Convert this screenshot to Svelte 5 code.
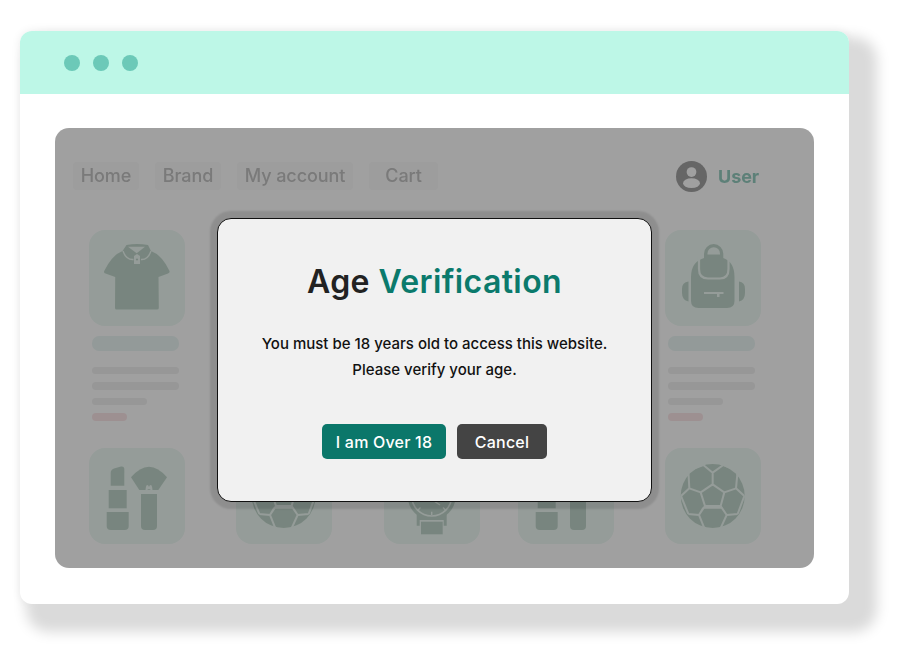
<script>
  const navItems = [
    { label: 'Home', width: 66 },
    { label: 'Brand', width: 66 },
    { label: 'My account', width: 116 },
    { label: 'Cart', width: 69 }
  ];
  const topRow = ['shirt', 'watch', 'ball', 'makeup', 'bag'];
  const bottomRow = ['makeup', 'ball', 'watch', 'makeup', 'ball'];
  const ballLines = 'M173 133 208 157 197 198 150 198 137 157Z M173 133 173 98 M208 157 243 145 M197 198 215 225 M150 198 132 225 M137 157 103 145 M173 98 145 75 M173 98 205 75 M145 75 100 92 M205 75 248 92 M100 92 103 145 M248 92 243 145 M103 145 78 168 M243 145 268 168 M78 168 100 222 M268 168 248 222 M100 222 132 225 M248 222 215 225 M145 203 200 203 M132 225 147 262 M215 225 198 262 M145 203 132 225 M200 203 215 225';
</script>

{#snippet icon(name)}
  <svg class="icon" viewBox="0 0 95 95" aria-hidden="true">
    {#if name === 'shirt'}
      <path class="fill" d="M37.5 15 Q48 13 59 15 L62 21 Q73 25 80.5 41 Q81 43 79 43.5 L69.5 47 L69.8 78 Q69.8 79.5 68 79.5 L27.5 79.5 Q26 79.5 26 78 L26.2 47 L16.5 43.5 Q14.5 43 15.2 41 Q23 25 33.5 21Z" />
      <path class="tint" d="M39 16.7 H56 L47.7 23.3Z" />
      <path class="stroke thin" d="M34 21 Q37 30 44.5 29.5 M62 21 Q59 30 52 29.5" />
      <path class="tint" d="M45 26 L48 24 L51 26 V34 H45Z" />
      <circle class="fill" cx="48" cy="29.5" r="1.1" />
    {:else if name === 'bag'}
      <path class="fill" d="M17 59 Q17 52 23.5 51.5 V71.5 Q17 70 17 63Z M80 59 Q80 52 74 51.5 V71.5 Q80 70 80 63Z" />
      <path class="fill" d="M39 28 V23.7 A9.65 9.65 0 0 1 58.3 23.7 V28 Q69.5 32 69.5 47 V71 Q69.5 78 62 78 H33.5 Q26 78 26 71 V47 Q26 32 39 28Z" />
      <path class="tint" d="M42.5 24.5 V23.5 A6.25 6.25 0 0 1 55 23.5 V24.5Z" />
      <path class="stroke" d="M34 27 V39 Q34 48.5 43 48.5 H55 Q63.5 48.5 63.5 39 V27" />
      <path class="tint" d="M39 62 H58.5 V64 H54.5 V67 H52 V64 H39Z" />
    {:else if name === 'makeup'}
      <path class="fill" d="M21.7 37.7 V25 Q21.7 21.5 25 20.5 L32 18.5 Q35.3 18 35.3 21 V37.7Z" />
      <rect class="fill" x="19.7" y="42" width="18" height="18.3" />
      <path class="fill" d="M17.7 64 H39.7 V78 Q39.7 82 35.7 82 H21.7 Q17.7 82 17.7 78Z" />
      <path class="fill" d="M52 46 H68 V78 Q68 82 64 82 H56 Q52 82 52 78Z" />
      <path class="fill" d="M42 29.3 Q60 8 78 29.3 L69.3 42 H50.3Z" />
      <path class="tint" d="M56.5 42 Q57 37 58.2 37 Q59.5 37 60 39 Q60.5 37 61.8 37 Q63 37 63.5 42 L62 42 L60 41 L58 42Z" />
    {:else if name === 'ball'}
      <circle class="fill" cx="47.7" cy="48" r="32" />
      <path class="ball-lines" transform="translate(-10 -8) scale(.3333)" d={ballLines} />
    {:else if name === 'watch'}
      <rect class="fill" x="37" y="9" width="21.7" height="14" />
      <path class="fill" d="M32.7 60 H62.7 V77.7 H59.7 V72 H35.7 V77.7 H32.7Z" />
      <circle class="fill" cx="47.7" cy="48" r="24" />
      <circle class="ring" cx="47.7" cy="48" r="20" />
      <path class="stroke thin" d="M47.7 67 V63.7 M34 62 L36.5 59.5 M61.5 62 L59 59.5 M51 53.7 L56 57" />
      <rect class="fill" x="37" y="73.7" width="21.7" height="12.6" />
    {/if}
  </svg>
{/snippet}

<div class="page">
  <div class="window">
    <header class="titlebar">
      <span class="dot"></span>
      <span class="dot"></span>
      <span class="dot"></span>
    </header>
    <div class="body">
      <section class="stage">
        <div class="content">
          <nav class="nav">
            <div class="links">
              {#each navItems as item}
                <a class="link" style="width:{item.width}px">{item.label}</a>
              {/each}
            </div>
            <div class="user">
              <svg class="avatar" viewBox="0 0 30 30" aria-hidden="true">
                <circle cx="15" cy="15" r="15" fill="#a3a3a3" />
                <circle cx="15" cy="10.7" r="4.7" fill="#fff" />
                <ellipse cx="15" cy="21.5" rx="8.2" ry="4.7" fill="#fff" />
              </svg>
              <span class="username">User</span>
            </div>
          </nav>
          <div class="products">
            {#each topRow as name}
              <article class="product">
                <div class="tile">{@render icon(name)}</div>
                <div class="bar title"></div>
                <div class="bar line"></div>
                <div class="bar line"></div>
                <div class="bar line short"></div>
                <div class="bar price"></div>
              </article>
            {/each}
            {#each bottomRow as name}
              <article class="product">
                <div class="tile">{@render icon(name)}</div>
              </article>
            {/each}
          </div>
        </div>
        <div class="scrim"></div>
        <div class="dialog">
          <h1>Age <em>Verification</em></h1>
          <p>You must be 18 years old to access this website.<br />Please verify your age.</p>
          <div class="actions">
            <button class="primary">I am Over 18</button>
            <button class="secondary">Cancel</button>
          </div>
        </div>
      </section>
    </div>
  </div>
</div>

<style>
  :global(body) {
    margin: 0;
    background: #fff;
    font-family: Inter, "Liberation Sans", sans-serif;
  }
  .page {
    width: 899px;
    height: 647px;
    padding: 31px 0 0 20px;
    box-sizing: border-box;
    overflow: hidden;
  }
  .window {
    width: 829px;
    height: 573px;
    border-radius: 12px;
    background: #fff;
    box-shadow: 17px 17px 13px 11px #dadada, 0 0 10px rgba(0, 0, 0, 0.08);
    overflow: hidden;
    display: flex;
    flex-direction: column;
  }
  .titlebar {
    height: 63px;
    flex: none;
    box-sizing: border-box;
    padding: 1px 0 0 44px;
    background: #bdf7e7;
    display: flex;
    align-items: center;
    gap: 13px;
  }
  .dot {
    width: 16px;
    height: 16px;
    border-radius: 50%;
    background: #6cc9b8;
  }
  .body {
    padding: 34px 35px 36px;
    flex: 1;
    min-height: 0;
  }
  .stage {
    position: relative;
    width: 759px;
    height: 440px;
    border-radius: 14px;
    overflow: hidden;
    background: #fff;
  }
  .content {
    padding: 34px 0 0 18px;
    filter: blur(0.6px);
  }
  .nav {
    display: flex;
    align-items: center;
    justify-content: space-between;
    height: 28px;
    padding-right: 55px;
  }
  .links {
    display: flex;
    gap: 16px;
  }
  .link {
    height: 28px;
    line-height: 28px;
    border-radius: 4px;
    background: #fafafa;
    color: #c2c2c2;
    font-size: 18px;
    font-weight: 500;
    letter-spacing: -0.1px;
    text-align: center;
    white-space: nowrap;
  }
  .user {
    display: flex;
    align-items: center;
    gap: 11.5px;
  }
  .avatar {
    width: 31px;
    height: 31px;
  }
  .username {
    color: #94ccbf;
    font-size: 18px;
    font-weight: 700;
    letter-spacing: -0.1px;
  }
  .products {
    display: grid;
    grid-template-columns: 147px 148px 134px 147px 95px;
    row-gap: 27.5px;
    margin: 40px 0 0 16px;
  }
  .tile {
    width: 95.5px;
    height: 96px;
    border-radius: 16px;
    background: #edf9f4;
  }
  .icon {
    display: block;
    width: 95px;
    height: 95px;
  }
  .fill { fill: #c0d5ca; }
  .tint { fill: #edf9f4; }
  .stroke {
    fill: none;
    stroke: #edf9f4;
    stroke-width: 2.2;
  }
  .thin { stroke-width: 1.4; }
  .ball-lines {
    fill: none;
    stroke: #edf9f4;
    stroke-width: 6;
  }
  .ring {
    fill: none;
    stroke: #edf9f4;
    stroke-width: 1.6;
  }
  .bar {
    margin-left: 3px;
    width: 87px;
    height: 7.5px;
    border-radius: 4px;
    background: #f1f1f1;
    margin-top: 8px;
  }
  .bar.title {
    height: 14.5px;
    border-radius: 7px;
    background: #ebf6f4;
    margin-top: 10px;
    margin-bottom: 16px;
  }
  .bar.short { width: 55px; }
  .bar.price {
    width: 35px;
    background: #fbe6e8;
  }
  .scrim {
    position: absolute;
    inset: 0;
    background: rgba(0, 0, 0, 0.373);
  }
  .dialog {
    position: absolute;
    left: 162px;
    top: 90px;
    width: 435px;
    height: 284px;
    box-sizing: border-box;
    border: 1px solid #111;
    border-radius: 14px;
    background: #f1f1f1;
    box-shadow: 0 0 2px 7px rgba(0, 0, 0, 0.11);
    text-align: center;
  }
  h1 {
    margin: 43px 0 0;
    font-size: 32px;
    line-height: 40px;
    font-weight: 600;
    letter-spacing: 0.4px;
    color: #222;
  }
  em {
    font-style: normal;
    color: #0b7a6c;
  }
  p {
    margin: 29px 0 0;
    font-size: 15px;
    line-height: 26px;
    font-weight: 500;
    color: #111;
  }
  .actions {
    display: flex;
    justify-content: center;
    gap: 11px;
    margin-top: 41px;
  }
  button {
    height: 35px;
    border: 0;
    border-radius: 5px;
    color: #fff;
    font: 500 16px Inter, "Liberation Sans", sans-serif;
    letter-spacing: 0.2px;
  }
  .primary {
    width: 124px;
    background: #0b776a;
  }
  .secondary {
    width: 90px;
    background: #444;
  }
</style>
